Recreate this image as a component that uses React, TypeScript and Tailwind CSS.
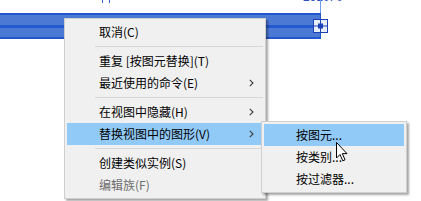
import React from 'react';

type Item = { label: string; arrow?: boolean; disabled?: boolean; active?: boolean } | 'sep';

const mainItems: Item[] = [
  { label: '取消(C)' },
  'sep',
  { label: '重复 [按图元替换](T)' },
  { label: '最近使用的命令(E)', arrow: true },
  'sep',
  { label: '在视图中隐藏(H)', arrow: true },
  { label: '替换视图中的图形(V)', arrow: true, active: true },
  'sep',
  { label: '创建类似实例(S)' },
  { label: '编辑族(F)', disabled: true },
];

const subItems: Item[] = [
  { label: '按图元...', active: true },
  { label: '按类别...' },
  { label: '按过滤器...' },
];

const Chevron = () => (
  <svg width="5" height="8" viewBox="0 0 5 8" className="shrink-0">
    <path d="M0.8 0.8 L4 4 L0.8 7.2" fill="none" stroke="#3c3c3c" strokeWidth="1.1" />
  </svg>
);

const MenuList = ({ items }: { items: Item[] }) => (
  <div className="flex flex-col p-[2px]">
    {items.map((it, i) =>
      it === 'sep' ? (
        <div key={i} className="h-[7px] flex items-center pl-[28px]">
          <div className="h-px w-full bg-[#d7d7d7]" />
        </div>
      ) : (
        <div
          key={i}
          className={`h-[22px] flex items-center pl-[32px] pr-[9px] ${it.active ? 'bg-[#91c9f7]' : ''} ${
            it.disabled ? 'text-[#6d6d6d]' : 'text-black'
          }`}
        >
          <span className="flex-1 whitespace-nowrap">{it.label}</span>
          {it.arrow && <Chevron />}
        </div>
      )
    )}
  </div>
);

export default function App() {
  return (
    <div
      className="relative w-[421px] h-[201px] overflow-hidden bg-white text-[12px] leading-none"
      style={{ fontFamily: '"Noto Sans CJK SC", "Noto Sans", sans-serif' }}
    >
      {/* dimension text, cut by the top edge */}
      <div className="absolute left-[303px] top-[-9px] text-[12px] text-[#2e52c2]" style={{ fontFamily: '"Liberation Sans", sans-serif' }}>
        2910. 0
      </div>
      <div className="absolute left-[102px] top-0 w-px h-[3px] bg-[#3a62d0]" />
      <div className="absolute left-[109px] top-0 w-px h-[3px] bg-[#3a62d0]" />
      <div className="absolute left-[320px] top-0 w-px h-[14px] bg-[#6f9ce8]" />

      {/* selected element bar */}
      <div className="absolute left-0 top-[13px] w-[321px] h-[26px] flex flex-col bg-[#4c79d4] border-t-[2px] border-b-[2px] border-r border-[#2256cc]">
        <div className="h-[10px]" />
        <div className="h-[3px] bg-[#2358cf]" />
      </div>

      {/* grip handle */}
      <svg className="absolute left-[313px] top-[19px]" width="15" height="14" viewBox="0 0 15 14">
        <rect x="0.5" y="0.5" width="14" height="13" fill="#e8eefc" stroke="#1d3fb8" />
        <line x1="7.5" y1="1" x2="7.5" y2="13" stroke="#1d3fb8" />
        <line x1="1" y1="7" x2="14" y2="7" stroke="#1d3fb8" />
        <rect x="5" y="4.5" width="5" height="5" fill="#1d3fb8" />
      </svg>

      {/* context menu */}
      <div className="absolute left-[64px] top-[18px] w-[202px] bg-[#f0f0f0] border border-[#cfcfcf] shadow-[2px_2px_2px_rgba(0,0,0,0.35)]">
        <MenuList items={mainItems} />
      </div>

      {/* submenu */}
      <div className="absolute left-[261px] top-[121px] w-[146px] bg-[#f0f0f0] border border-[#cfcfcf] shadow-[2px_2px_2px_rgba(0,0,0,0.35)]">
        <MenuList items={subItems} />
      </div>

      {/* mouse cursor */}
      <svg className="absolute left-[336px] top-[142px]" width="13" height="20" viewBox="0 0 13 20">
        <path d="M0.5 0.5 L0.5 16 L4 12.5 L6.8 18.8 L9 17.8 L6.3 11.6 L11 11.6 Z" fill="#fff" stroke="#000" strokeWidth="1" strokeLinejoin="miter" />
      </svg>
    </div>
  );
}
